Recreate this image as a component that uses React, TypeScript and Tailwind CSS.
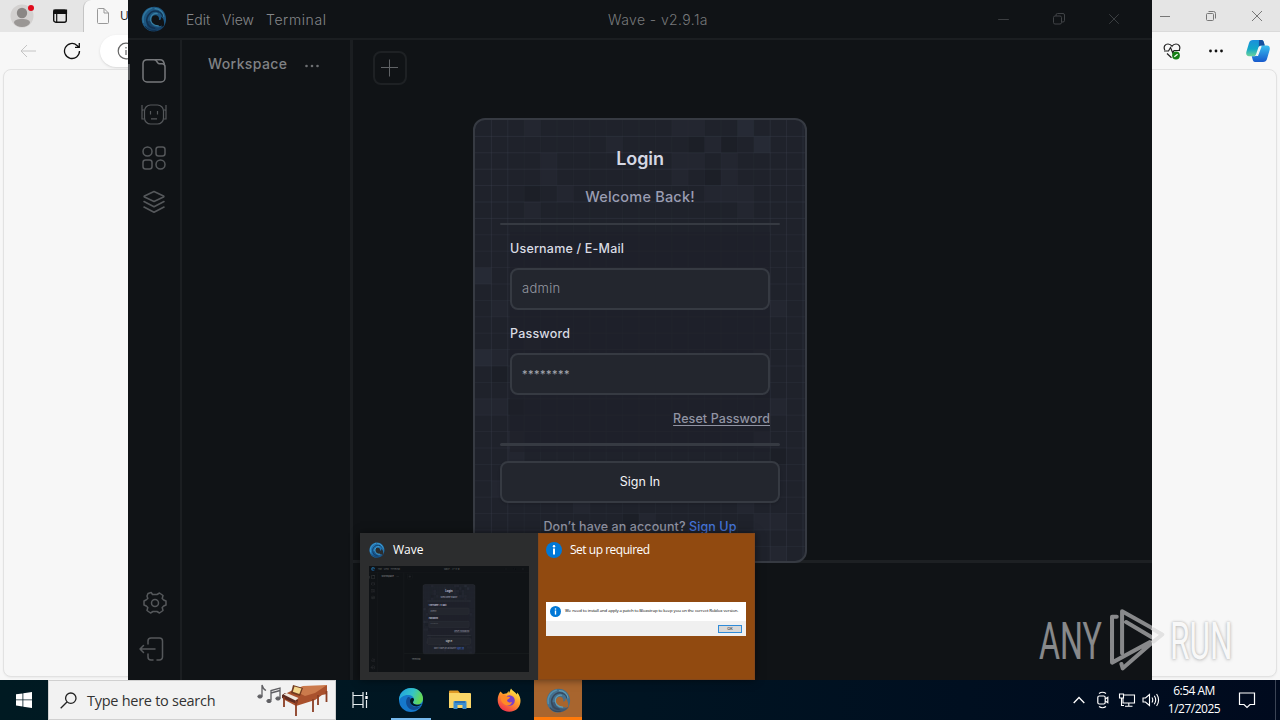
import { Minus, X } from "lucide-react";

const LIGHT_CELLS = [
  [3, 0], [12, 0], [13, 0], [16, 0], [16, 0], [8, 1], [14, 1], [17, 1], [17, 1], [12, 2], [13, 2], [15, 2], [12, 3], [15, 3], [4, 3],
  [4, 2], [5, 4], [14, 4], [15, 4], [16, 4], [3, 5], [16, 5], [0, 9], [0, 9], [1, 11], [0, 14], [0, 14], [1, 14], [3, 13], [17, 14],
  [1, 17], [0, 17], [2, 19], [2, 20], [17, 19], [18, 17], [17, 19], [6, 23], [8, 25], [10, 24], [16, 23], [17, 24], [18, 24], [18, 26], [1, 22], [18, 11],
];
const DARK_CELLS = [[13, 1], [15, 1], [14, 3], [3, 4], [2, 17], [9, 24], [17, 16], [1, 15], [18, 20]];
const PITCH = 16.4;

function WaveLogo({ size, className = "" }: { size: number; className?: string }) {
  return (
    <svg width={size} height={size} viewBox="0 0 24 24" className={className} aria-hidden="true">
      <path d="M5 3C9 0 16-.5 20 4c4 4.500 4 10.500 1 15 1-5-.5-8-2.500-9 .5 2-.5 3-2 3 .5-2.500-.5-4-2.500-4.500-3-.5-5 2-4.500 5 .6 4 5 6 10 4.500C17 23 11 25 6 22-1 17.500-1 8 5 3z" fill="#2374b0" />
      <path d="M9 13.500c0 3.500 2.500 6 6.500 6.300 2.800.1 5-.8 6.500-2.300-1.500 3.500-5.500 6-10 5.800-5-.2-8-5-6-9.500z" fill="#1a568c" />
      <g fill="none" strokeLinecap="round">
        <path d="M2.200 15C.8 9 4.500 3.500 10 2" stroke="#3d9fd6" strokeWidth="1.300" />
        <path d="M12.500 20.500C6 20 3.800 13.500 6.500 9 8.800 5.200 12.500 4 16 5" stroke="#123f6b" strokeWidth="1.500" />
        <path d="M16 18.300c-5 0-7.800-3.500-7-7.300C9.700 8 12.500 6.500 15 7" stroke="#4bb0e0" strokeWidth="1.100" />
        <path d="M13 2.500c4 0 7.500 3 8 7" stroke="#4bb0e0" strokeWidth="1.100" />
        <path d="M15.500 5.200c2.500.5 4 2.300 4.400 4.300" stroke="#123f6b" strokeWidth="1" />
        <path d="M4 19c2.500 3 6.500 4 10 3.300" stroke="#123f6b" strokeWidth="1" />
      </g>
    </svg>
  );
}

function InfoDot({ size }: { size: number }) {
  return (
    <svg width={size} height={size} viewBox="0 0 16 16" className="shrink-0" aria-hidden="true">
      <circle cx="8" cy="8" r="8" fill="#0078d7" />
      <circle cx="8" cy="4.300" r="1.200" fill="#fff" />
      <path d="M8 6.500v6" stroke="#fff" strokeWidth="2" />
    </svg>
  );
}

function CardGrid() {
  return (
    <svg className="absolute inset-0 h-full w-full" viewBox="0 0 330 441" aria-hidden="true">
      {LIGHT_CELLS.map(([c, r], i) => (
        <rect key={i} x={c * PITCH} y={r * PITCH} width={PITCH} height={PITCH} fill="#444c5e" opacity="0.12" />
      ))}
      {DARK_CELLS.map(([c, r], i) => (
        <rect key={i} x={c * PITCH} y={r * PITCH} width={PITCH} height={PITCH} fill="#14161b" opacity="0.22" />
      ))}
      {Array.from({ length: 20 }, (_, i) => (
        <path key={i} d={`M${(i + 1) * PITCH} 0V441`} stroke="#3d4250" strokeWidth="1" opacity={i < 2 || i > 16 ? 0.35 : 0.14} />
      ))}
      {Array.from({ length: 26 }, (_, i) => (
        <path key={i} d={`M0 ${(i + 1) * PITCH}H330`} stroke="#3d4250" strokeWidth="1" opacity={i < 6 ? 0.35 : 0.22} />
      ))}
      <rect x="35" y="112" width="260" height="220" fill="#1e2129" opacity="0.65" />
    </svg>
  );
}

function LoginCard() {
  return (
    <div className="relative h-[445px] w-[334px] overflow-hidden rounded-xl border-2 border-[#363a42] bg-[#1f222b]">
      <CardGrid />
      <div className="relative flex flex-col px-[25px] pt-[27px]">
        <h1 className="text-center text-[18px] leading-6 font-semibold tracking-[-0.1px] text-[#d5d8e4]">Login</h1>
        <p className="mt-4 text-center text-[14.5px] leading-5 font-medium tracking-[0.2px] text-[#9a9db2]">Welcome Back!</p>
        <div className="mt-4 h-0.5 rounded bg-[#363a42]" />
        <div className="flex flex-col px-2.5">
          <label className="mt-3.5 text-[12.5px] leading-5 font-medium tracking-[0.2px] text-[#d9dbe3]">Username / E-Mail</label>
          <div className="mt-[9px] flex h-[42px] items-center rounded-lg border-2 border-[#363a42] bg-[#23262e] px-2.5 text-[13px] font-light tracking-[0.3px] text-[#9699a2]">admin</div>
          <label className="mt-3.5 text-[12.5px] leading-5 font-medium tracking-[0.2px] text-[#d9dbe3]">Password</label>
          <div className="mt-[9px] flex h-[42px] items-center rounded-lg border-2 border-[#363a42] bg-[#23262e] px-2.5 text-[11px] tracking-[0.5px] text-[#a9abb3]">********</div>
          <a className="mt-3.5 self-end text-[12.5px] leading-5 font-medium tracking-[0.1px] whitespace-nowrap text-[#9194a3] underline underline-offset-2">Reset Password</a>
        </div>
        <div className="mt-3.5 h-[3px] rounded bg-[#363a42]" />
        <button className="mt-[15px] h-[42px] rounded-lg border-2 border-[#363a42] bg-[#23262e] text-[12.5px] text-[#f2f2f5] shadow">Sign In</button>
        <p className="mt-3.5 text-center text-[12.5px] leading-5 font-medium tracking-[0.1px] whitespace-nowrap text-[#8f92a1]">
          Don’t have an account? <a className="text-[#4574d8] underline underline-offset-2">Sign Up</a>
        </p>
      </div>
    </div>
  );
}

function SideIcons() {
  return (
    <div className="relative flex w-[54px] shrink-0 flex-col items-center border-r-2 border-[#1b1e21] pt-[18px] pb-[17px] text-[#55585b]">
      <span className="absolute top-[24px] left-0 h-4 w-0.5 bg-[#54575a]" />
      <svg width="26" height="26" viewBox="0 0 26 26" fill="none" stroke="#77797c" strokeWidth="1.500" aria-hidden="true">
        <path d="M6 1.700h7.500c1 0 1.500.5 2 1.300l1 1.500c.6.8 1.200 1.200 2.200 1.200H21.500a3 3 0 0 1 2.500 3V20a4 4 0 0 1-4 4H6a4 4 0 0 1-4-4V5.500a4 4 0 0 1 4-3.800z" />
        <path d="M13.500 1.700H19c2.500 0 4 1.800 4.300 4.500" />
      </svg>
      <svg width="28" height="26" viewBox="0 0 28 26" fill="none" stroke="currentColor" strokeWidth="1.200" className="mt-[17px]" aria-hidden="true">
        <rect x="4.500" y="4" width="19" height="19" rx="6" />
        <path d="M4.500 9H3a1 1 0 0 0-1 1v8h2.500M23.500 9H25a1 1 0 0 1 1 1v8h-2.500M2 10V4M26 10V4M10.500 10v3.500M17.500 10v3.500M11 17.800h6" />
      </svg>
      <svg width="26" height="26" viewBox="0 0 26 26" fill="none" stroke="currentColor" strokeWidth="1.500" className="mt-[18px]" aria-hidden="true">
        <circle cx="6.500" cy="6.500" r="4.500" />
        <rect x="15" y="2" width="9" height="9" rx="2.500" />
        <rect x="2" y="15" width="9" height="9" rx="2.500" />
        <circle cx="19.500" cy="19.500" r="4.500" />
      </svg>
      <svg width="26" height="26" viewBox="0 0 26 26" fill="none" stroke="currentColor" strokeWidth="1.600" strokeLinejoin="round" strokeLinecap="round" className="mt-[18px]" aria-hidden="true">
        <path d="M13 2.500l9.500 4.500q.8.500 0 1L13 12.500 3.500 8q-.8-.5 0-1zM3 12.500l10 5.200 10-5.200M3 18l10 5.200L23 18" />
      </svg>
      <svg width="26" height="26" viewBox="0 0 26 26" fill="none" stroke="currentColor" strokeWidth="1.500" strokeLinejoin="round" className="mt-auto ml-0.5" aria-hidden="true">
        <circle cx="13" cy="13" r="3.500" />
        <path d="M10.500 4.500L9.200 2.500 6 3.500 5 6l.8 2.500L4 10l-2 1v4l2.300 1 1.500 1.500L5 20.500l3.500 2.500 2.500-1.500h4l2.500 1.500 3.500-2.500-.8-3 1.500-1.500L24 15v-4l-2.300-1-1.500-1.500L21 5.500 17.500 3 15 4.500z" />
      </svg>
      <svg width="28" height="28" viewBox="0 0 28 28" fill="none" stroke="currentColor" strokeWidth="1.500" strokeLinecap="round" strokeLinejoin="round" className="mt-[19px] mr-1" aria-hidden="true">
        <path d="M10 9V6a3 3 0 0 1 3-3h8.500a3 3 0 0 1 3 3v16a3 3 0 0 1-3 3H19M15 25h-2a3 3 0 0 1-3-3v-3M17 14H2M5.500 10.500L2 14l3.500 3.500" />
      </svg>
    </div>
  );
}

function WaveWindow() {
  return (
    <div className="relative flex h-[680px] w-[1024px] shrink-0 flex-col bg-[#101316] font-['Inter',sans-serif]">
      <div className="relative flex h-10 shrink-0 items-center border-b-2 border-[#1b1e21] pl-[13px] text-[14px] font-light text-[#85878a]">
        <WaveLogo size={26} className="opacity-70" />
        <span className="ml-[19px] w-9 whitespace-nowrap">Edit</span>
        <span className="w-11 whitespace-nowrap">View</span>
        <span className="tracking-[0.6px] whitespace-nowrap">Terminal</span>
        <span className="absolute left-[480px] tracking-[0.4px] whitespace-nowrap text-[#77797b]">Wave - v2.9.1a</span>
        <div className="ml-auto flex items-center text-[#404346]">
          <Minus size={17} strokeWidth={1.3} />
          <svg width="14" height="14" viewBox="0 0 14 14" fill="none" stroke="currentColor" className="ml-[40px]" aria-hidden="true">
            <rect x="1.500" y="4" width="8" height="8" rx="1.500" />
            <path d="M4 4V3a1.500 1.500 0 0 1 1.500-1.500H11A1.500 1.500 0 0 1 12.500 3v5.500A1.500 1.500 0 0 1 11 10H9.500" />
          </svg>
          <X size={18} strokeWidth={1.2} className="mr-[29px] ml-[39px]" />
        </div>
      </div>
      <div className="flex min-h-0 flex-1">
        <SideIcons />
        <div className="flex w-[171px] shrink-0 items-start justify-between border-r-[3px] border-[#1b1e21] pt-3.5 pr-[29px] pl-[26px]">
          <span className="text-[14px] leading-5 font-medium tracking-[0.4px] text-[#808285]">Workspace</span>
          <svg width="18" height="24" viewBox="0 0 18 24" fill="#6d6f72" aria-hidden="true">
            <circle cx="3.500" cy="12" r="1.300" />
            <circle cx="9" cy="12" r="1.300" />
            <circle cx="14.500" cy="12" r="1.300" />
          </svg>
        </div>
        <div className="flex min-w-0 flex-1 flex-col">
          <div className="flex-1 pt-[11px] pl-5">
            <button className="flex size-[34px] items-center justify-center rounded-lg border-2 border-[#1e2124]">
              <svg width="20" height="20" viewBox="0 0 20 20" stroke="#606366" aria-hidden="true">
                <path d="M9.500 1.500v17M1 9.500h17" />
              </svg>
            </button>
          </div>
          <div className="h-[120px] border-t-[3px] border-[#1d2023] pt-6 pl-12 text-[14px] text-[#808285]">Terminal</div>
        </div>
      </div>
      <div className="absolute inset-0 flex items-center justify-center pt-px">
        <LoginCard />
      </div>
    </div>
  );
}

function EdgeLeft() {
  return (
    <div className="flex h-[680px] w-32 shrink-0 flex-col overflow-hidden bg-[#f7f7f7]">
      <div className="flex h-8 shrink-0 items-center bg-[#e5e5e5] pl-2.5">
        <svg width="26" height="32" viewBox="0 0 26 32" className="shrink-0" aria-hidden="true">
          <circle cx="12" cy="16" r="11.500" fill="#d3d1d0" />
          <circle cx="12" cy="13" r="5.200" fill="#8a8785" />
          <path d="M4 23c0-3 3-4 8-4s8 1 8 4c-1.500 2.700-4.500 4-8 4s-6.500-1.300-8-4z" fill="#9a9795" />
          <circle cx="21" cy="8" r="3" fill="#e00b1c" />
        </svg>
        <svg width="16" height="16" viewBox="0 0 16 16" className="ml-4 shrink-0" aria-hidden="true">
          <rect x="1.700" y="2.200" width="12.600" height="12" rx="2" fill="none" stroke="#111" strokeWidth="1.400" />
          <path d="M2 2h12.500v3.500H2zM4.700 5v9" fill="#111" stroke="#111" strokeWidth="1.200" />
        </svg>
        <div className="ml-[15px] flex h-8 w-[45px] items-center rounded-tl-lg border-l border-[#c4c4c4] bg-[#f7f7f7] pl-3 font-['Open_Sans',sans-serif] text-[12px] text-[#222]">
          <svg width="14" height="18" viewBox="0 0 14 18" fill="none" stroke="#999" className="shrink-0" aria-hidden="true">
            <path d="M1.500 2.500a1 1 0 0 1 1-1H8L12.500 6v9.500a1 1 0 0 1-1 1h-9a1 1 0 0 1-1-1zM8 1.500V6h4.500" />
          </svg>
          <span className="ml-2.5">U</span>
        </div>
      </div>
      <div className="flex h-[37px] shrink-0 items-center pl-[19px]">
        <svg width="18" height="16" viewBox="0 0 18 16" fill="none" stroke="#c4c4c4" className="shrink-0" aria-hidden="true">
          <path d="M17 8H2M8 2L2 8l6 6" />
        </svg>
        <svg width="18" height="18" viewBox="0 0 18 18" fill="none" stroke="#111" strokeWidth="1.300" className="ml-[26px] shrink-0" aria-hidden="true">
          <path d="M16.500 9a7.500 7.500 0 1 1-2.500-5.600L15.800 5M16.300 1v4.300H12" />
        </svg>
        <div className="ml-[19px] flex h-8 w-14 shrink-0 items-center rounded-l-full bg-white pl-[17px] shadow-sm">
          <svg width="18" height="18" viewBox="0 0 18 18" fill="none" stroke="#666" strokeWidth="1.200" className="shrink-0" aria-hidden="true">
            <circle cx="9" cy="9" r="7.800" />
            <path d="M9 8v5M9 5v1.500" />
          </svg>
        </div>
      </div>
      <div className="mb-[3px] ml-[3px] w-36 flex-1 rounded-lg border border-[#e2e2e2] bg-[#f7f7f7] shadow-xs" />
    </div>
  );
}

function EdgeRight() {
  return (
    <div className="flex h-[680px] w-32 shrink-0 flex-col overflow-hidden bg-[#f7f7f7]">
      <div className="flex h-8 shrink-0 items-center border-b border-[#dadada] bg-[#e5e5e5] pl-2 text-[#777]">
        <svg width="10" height="10" viewBox="0 0 10 10" stroke="currentColor" aria-hidden="true">
          <path d="M0 5.500h10" />
        </svg>
        <svg width="12" height="12" viewBox="0 0 12 12" fill="none" stroke="currentColor" className="ml-[35px]" aria-hidden="true">
          <rect x="1.500" y="3.500" width="7" height="7" rx="1" />
          <path d="M3.500 1.500h5a2 2 0 0 1 2 2v5" />
        </svg>
        <svg width="12" height="12" viewBox="0 0 12 12" stroke="currentColor" className="ml-[34px]" aria-hidden="true">
          <path d="M1 1l10 10M11 1L1 11" />
        </svg>
      </div>
      <div className="flex h-[37px] shrink-0 items-center pl-[11px]">
        <svg width="18" height="18" viewBox="0 0 18 18" fill="none" stroke="#222" strokeWidth="1.200" aria-hidden="true">
          <path d="M1.800 8C0 4.500 2.500 2 5 2c2 0 3.200 1 4 2.300C9.800 3 11 2 13 2c2.500 0 5 2.500 3.200 6M1 9h4.500l2-3.500 2.300 5.500L11 8.500h6M4 11.500l4.500 4.300" />
          <circle cx="13" cy="13.500" r="3.900" fill="#168016" stroke="none" />
          <path d="M11.300 14.800l3.300-2.600" stroke="#fff" />
        </svg>
        <svg width="16" height="6" viewBox="0 0 16 6" fill="#111" className="ml-[27px]" aria-hidden="true">
          <circle cx="2.500" cy="3" r="1.400" />
          <circle cx="8" cy="3" r="1.400" />
          <circle cx="13.500" cy="3" r="1.400" />
        </svg>
        <svg width="24" height="24" viewBox="0 0 24 24" className="ml-[22px]" aria-hidden="true">
          <defs>
            <linearGradient id="copilotA" x1="0" y1="0" x2="0" y2="1">
              <stop offset="0" stopColor="#1b8fdc" />
              <stop offset=".55" stopColor="#12a8c8" />
              <stop offset="1" stopColor="#6fd39a" />
            </linearGradient>
            <linearGradient id="copilotB" x1="0" y1="0" x2="0" y2="1">
              <stop offset="0" stopColor="#38bff0" />
              <stop offset="1" stopColor="#1759cc" />
            </linearGradient>
          </defs>
          <path d="M7 1h8.500c1.500 0 2 1 2.500 3l.7 2.500H15c-1.500 0-2.300 1-2.800 2.500L10 15.500c-.6 1.500-1.500 1.800-3 1.800H3c-2.500 0-3.200-2-2.600-4.500L3 4c.6-2 1.800-3 4-3z" fill="url(#copilotA)" />
          <path d="M17 23H9c-1.500 0-2-1-2.500-3l-.7-2.700H8.500c2 0 3-1 3.500-2.500l2-6c.6-1.800 1.500-2.300 3-2.300h4c2.500 0 3.200 2 2.600 4.500L21 20c-.6 2-1.800 3-4 3z" fill="url(#copilotB)" />
          <path d="M13 1h2.500c1.500 0 2 1 2.500 3l.7 2.500H15c-1 0-1.700.4-2.200 1.200z" fill="#174f9e" />
          <path d="M14 7.300h1.700L12 17h-2.500c1.300-.4 1.800-1.200 2.200-2.400z" fill="#f7f7f7" />
        </svg>
      </div>
      <div className="mr-[3px] mb-[3px] -ml-3 flex-1 rounded-lg border border-[#e2e2e2] bg-[#f7f7f7] shadow-xs" />
    </div>
  );
}

function Watermark() {
  return (
    <div className="absolute top-[610px] left-[1039px] flex h-[63px] w-[196px] items-center font-['Roboto',sans-serif] text-[51px] leading-[63px] font-normal text-white">
      <span className="block w-[69px] shrink-0 opacity-50">
        <span className="block w-[110px] origin-left scale-x-[0.63]">ANY</span>
      </span>
      <svg width="57" height="63" viewBox="324 88 170 188" fill="none" strokeWidth="12" strokeLinejoin="round" strokeLinecap="round" className="-mt-1 shrink-0" aria-hidden="true">
        <path d="M350 114H336V251L448 190M366 223V98L486 165L368 268L364 255M378 130L456 176" stroke="#fff" opacity=".5" />
        <path d="M460 152L486 167L460 188" stroke="#e2e2e2" />
      </svg>
      <span className="ml-[5px] block shrink-0 text-[#f8f8f8] [text-shadow:0_0_3px_#b4b4b4,0_1px_5px_#ccc]">
        <span className="block w-[66px] origin-left scale-x-[0.62]">RUN</span>
      </span>
    </div>
  );
}

function Previews() {
  return (
    <div className="absolute top-[533px] left-[360px] flex h-[147px] w-[395px] font-['Open_Sans',sans-serif] text-[12px] text-white shadow-[0_0_8px_rgba(0,0,0,0.5)]">
      <div className="w-[178px] bg-[#2c2d2e] pl-[9px]">
        <div className="flex h-[33px] items-center">
          <WaveLogo size={16} />
          <span className="ml-2">Wave</span>
        </div>
        <div className="h-[106px] w-40 overflow-hidden" aria-hidden="true">
          <div className="h-[680px] w-[1024px] origin-top-left scale-[0.15625]">
            <WaveWindow />
          </div>
        </div>
      </div>
      <div className="w-[217px] border border-[#83471a] bg-[#914a10] px-[7px]">
        <div className="flex h-8 items-center">
          <InfoDot size={16} />
          <span className="ml-2 tracking-[-0.48px]">Set up required</span>
        </div>
        <div className="mt-9 h-[34px] w-[200px] bg-white text-black">
          <div className="flex h-[19px] items-center pl-1">
            <InfoDot size={11} />
            <span className="ml-1 pb-0.5 text-[4.3px] leading-none tracking-[-0.11px] whitespace-nowrap">We need to install and apply a patch to Bloxstrap to keep you on the correct Roblox version.</span>
          </div>
          <div className="flex h-[15px] items-center justify-end bg-[#f0f0f0] pr-1">
            <span className="flex h-2 w-6 items-center justify-center border border-[#2f8bd8] bg-[#d8d8d8] text-[4px] leading-none">OK</span>
          </div>
        </div>
      </div>
    </div>
  );
}

function Taskbar() {
  return (
    <div className="flex h-10 items-center bg-gradient-to-r from-[#001a22] via-[#001422] to-[#000a1e] font-['Open_Sans',sans-serif] text-white">
      <div className="flex w-12 shrink-0 justify-center">
        <svg width="16" height="16" viewBox="0 0 16 16" fill="#fff" aria-hidden="true">
          <path d="M0 2.300l6.500-.9v6.100H0zM7.300 1.300L16 0v7.500H7.300zM0 8.300h6.500v6.100L0 13.500zM7.300 8.300H16V16l-8.700-1.200z" />
        </svg>
      </div>
      <div className="flex h-10 w-72 shrink-0 items-center border border-[#d0d0d0] bg-[#f2f2f2] pl-[11px] text-[#333]">
        <svg width="17" height="17" viewBox="0 0 17 17" fill="none" stroke="#222" strokeWidth="1.300" aria-hidden="true">
          <circle cx="10.800" cy="6.200" r="5.200" />
          <path d="M7 10L.7 16.300" />
        </svg>
        <span className="ml-2.5 w-[169px] pt-0.5 text-[14.5px] tracking-[-0.27px] whitespace-nowrap">Type here to search</span>
        <svg width="72" height="38" viewBox="0 0 72 38" aria-hidden="true">
          <g fill="#5f5f63" stroke="#5f5f63">
            <path d="M6 15V4q1 4 4 5.500M15 19V9.500L24 7v10M15 12l9-2.500" fill="none" strokeWidth="1.300" />
            <ellipse cx="4" cy="15.500" rx="2.200" ry="1.600" />
            <ellipse cx="13" cy="20" rx="2.200" ry="1.600" />
            <ellipse cx="22" cy="17.500" rx="2.200" ry="1.600" />
          </g>
          <path d="M27 14L43 6l20 0 8-2v9l-5 1-7 5-19 6-13-7z" fill="#a9512d" />
          <path d="M37 9l10-4 24-1-12 8-10 3z" fill="#cb7a4c" />
          <path d="M26 14l3-2 13 7-1 4-15-6z" fill="#5e2b20" />
          <path d="M27.500 13.500l3-1.500 12 5-3 2.500z" fill="#efe6dc" />
          <path d="M37 4l10 3-3 8-9-3z" fill="#713b20" />
          <path d="M38.500 5.500l7 2-2.200 5.500-6.500-2.200z" fill="#f3d68d" />
          <path d="M28 16v10M40 20v15M57 18v13M62 14v10M70.500 10v11" stroke="#8b3e24" strokeWidth="1.800" />
        </svg>
      </div>
      <div className="flex w-12 shrink-0 justify-center">
        <svg width="18" height="18" viewBox="0 0 18 18" fill="none" stroke="#e6edf0" strokeWidth="1.200" aria-hidden="true">
          <path d="M2 1v3.500h10V1M2 17v-3.500h10V17M2 4.500v9M12 4.500v9M15.500 1v3M15.500 9v8" />
          <rect x="14.300" y="5" width="2.400" height="3" fill="#fff" stroke="none" />
        </svg>
      </div>
      <div className="ml-[7px] flex h-10 w-10 shrink-0 items-center justify-center border-b-2 border-[#76b9ed] pt-0.5">
        <svg width="24" height="24" viewBox="0 0 24 24" aria-hidden="true">
          <defs>
            <linearGradient id="edgeTop" x1="0" y1="0" x2="1" y2=".3">
              <stop offset="0" stopColor="#1f9de0" />
              <stop offset=".6" stopColor="#34c4c9" />
              <stop offset="1" stopColor="#63d857" />
            </linearGradient>
          </defs>
          <circle cx="12" cy="12" r="12" fill="#1578cb" />
          <path d="M0 11C1 4 6 0 12 0c7 0 12 5 12 10.500 0 4-3 6-6 6-2.500 0-4-1-4-2 0-.8 1-1.300 1-3C15 9 12.500 7 9 7 4.500 7 1 9.500 0 13z" fill="url(#edgeTop)" />
          <path d="M9 9c-3 3-2.500 9 2 12 3.500 2 8 1 11-3-3 1.500-6.500 1.500-9-.5-2-1.700-2.500-4-1.500-6 .5-1.500-1-3-2.500-2.500z" fill="#114c93" />
          <path d="M11.500 11c-1 2-.5 4.500 1.500 6 2.500 2 7 2 10-1-2.500.9-5 .8-6.500.5-2-.5-2.700-1.500-2.500-2.500.3-.8 1-1.500 1-2.500 0-1.500-2.500-2-3.500-.5z" fill="#001822" />
        </svg>
      </div>
      <div className="flex w-[58px] shrink-0 justify-center">
        <svg width="22" height="20" viewBox="0 0 22 20" aria-hidden="true">
          <path d="M0 1.500a1 1 0 0 1 1-1h8L11 3H0z" fill="#e09b27" />
          <path d="M0 3h21a1 1 0 0 1 1 1v14H0z" fill="#fbd667" />
          <path d="M4.500 19v-7a1 1 0 0 1 1-1h11a1 1 0 0 1 1 1v7h-4v-4h-5v4z" fill="#3d8fd0" />
          <path d="M6 11h10v2H6z" fill="#2c72b3" />
        </svg>
      </div>
      <div className="flex w-10 shrink-0 justify-center">
        <svg width="24" height="24" viewBox="0 0 24 24" aria-hidden="true">
          <defs>
            <linearGradient id="fox" x1=".8" y1="0" x2=".2" y2="1">
              <stop offset="0" stopColor="#fff04b" />
              <stop offset=".45" stopColor="#ff9b2c" />
              <stop offset="1" stopColor="#f0274f" />
            </linearGradient>
          </defs>
          <path d="M3.500 3.500L6 6l4-.8L11.500 3l.5 2 2-4.500c1 2 4 3.500 6 6l.2-2C25 10 24 16 21 20c-4.500 5-13 5-17.500 0C-.5 15 0 8 3.500 3.500z" fill="url(#fox)" />
          <circle cx="12.500" cy="12.500" r="5.300" fill="#7a3fc8" />
          <path d="M4 7c2.500-1.200 5 0 6.500 1.800 1 0 2.500 0 2.500.7-.5 1.500-2.500 1.500-3 3 .5 2 3 2.500 5 1.500-1 3.500-5 4.500-7.500 2.500C4.500 15 3 11 4 7z" fill="#ff8a27" />
        </svg>
      </div>
      <div className="ml-[5px] flex h-10 w-12 shrink-0 items-center justify-center border-b-[3px] border-[#ff7a0a] bg-[#a8652e] pt-[3px]">
        <WaveLogo size={25} className="opacity-75" />
      </div>
      <div className="ml-auto flex h-10 items-center">
        <svg width="12" height="8" viewBox="0 0 12 8" fill="none" stroke="#fff" strokeWidth="1.300" aria-hidden="true">
          <path d="M.7 7L6 1.500 11.300 7" />
        </svg>
        <svg width="14" height="18" viewBox="0 0 14 18" fill="none" stroke="#fff" strokeWidth="1.200" className="ml-[11px]" aria-hidden="true">
          <rect x="1.800" y="5" width="7.400" height="8" rx="1.500" />
          <path d="M9.200 8l2.600-1.700v5.400L9.200 10M3 2.500q3.500-2.500 7 0M3 15.500q3.500 2.500 7 0" />
        </svg>
        <svg width="18" height="16" viewBox="0 0 18 16" fill="none" stroke="#fff" strokeWidth="1.100" className="ml-2" aria-hidden="true">
          <path d="M6 3h10.500v8H5V6M10.800 11v3M7 14.200h7.500M1.500 2h4v4h-4zM3.500 6v7.500H6" />
        </svg>
        <svg width="18" height="16" viewBox="0 0 18 16" fill="none" stroke="#fff" strokeWidth="1.100" className="ml-1.5" aria-hidden="true">
          <path d="M1 6h2.500L7.500 2.500v11L3.500 10H1zM10 5.500q1.500 2.500 0 5M12.300 3.700q2.800 4.300 0 8.600M14.600 2q4 6 0 12" />
        </svg>
        <div className="ml-[5px] flex w-[58px] flex-col items-center text-[12px] leading-[18px] tracking-[-0.5px] whitespace-nowrap">
          <span>6:54 AM</span>
          <span>1/27/2025</span>
        </div>
        <svg width="18" height="18" viewBox="0 0 18 18" fill="none" stroke="#fff" strokeWidth="1.200" className="ml-[15px]" aria-hidden="true">
          <path d="M1.500 2h15v11.500H12L9 16.500 6 13.500H1.500z" />
        </svg>
        <span className="mr-1 ml-[19px] h-10 w-px bg-[#3b4455]" />
      </div>
    </div>
  );
}

export default function App() {
  return (
    <div className="relative h-[720px] w-[1280px] overflow-hidden">
      <div className="flex">
        <EdgeLeft />
        <WaveWindow />
        <EdgeRight />
      </div>
      <Taskbar />
      <Previews />
      <Watermark />
    </div>
  );
}
